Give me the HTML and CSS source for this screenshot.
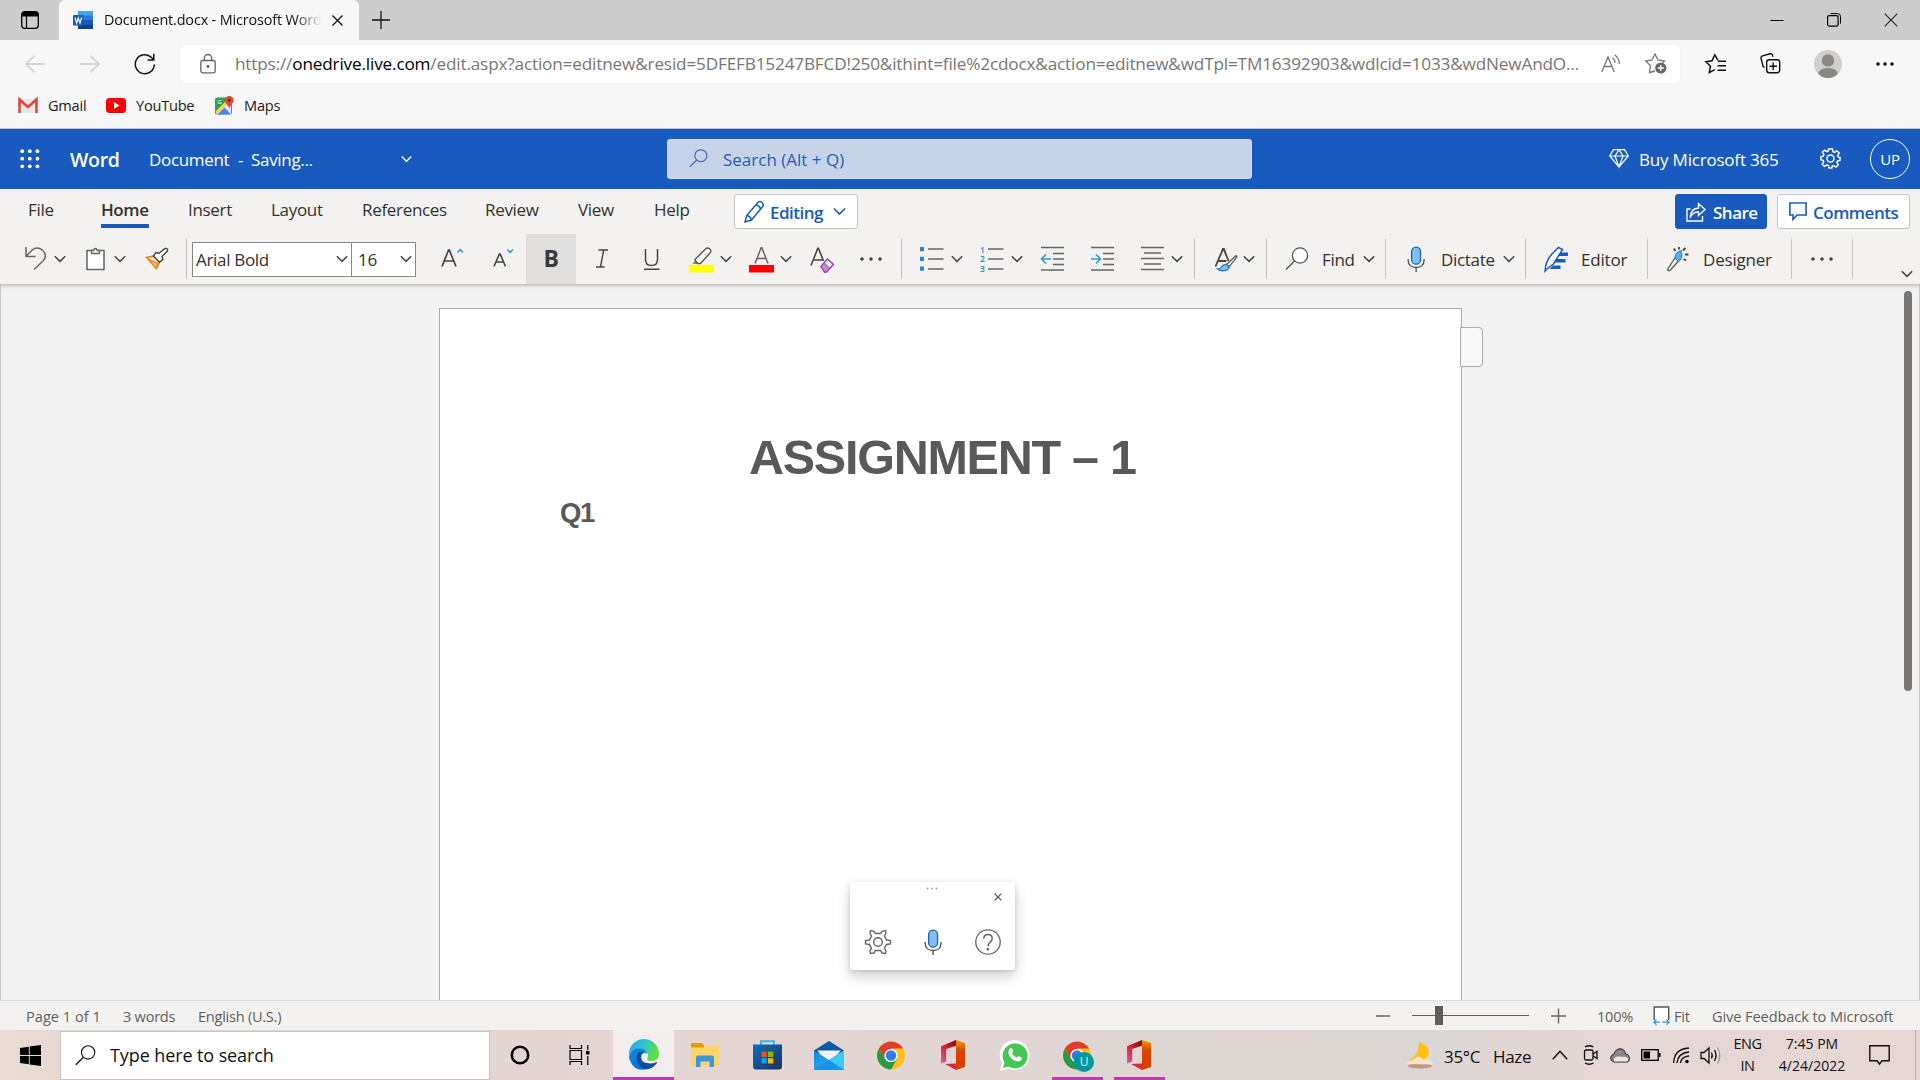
FILE: index.html
```html
<!DOCTYPE html>
<html lang="en">
<head>
<meta charset="utf-8">
<title>Document.docx - Microsoft Word Online</title>
<link rel="stylesheet" href="styles.css">
</head>
<body>
<svg width="0" height="0" class="defs" aria-hidden="true">
  <defs>
    <linearGradient id="officeA" x1="0" y1="0" x2="0" y2="1"><stop offset="0" stop-color="#f59b00"/><stop offset=".35" stop-color="#dc4402"/><stop offset="1" stop-color="#d83b01"/></linearGradient>
    <linearGradient id="officeB" x1="1" y1="0" x2="0" y2="1"><stop offset="0" stop-color="#7d0a12"/><stop offset=".5" stop-color="#d4202c"/><stop offset="1" stop-color="#c06bb8"/></linearGradient>
    <linearGradient id="edgeA" x1="0" y1="0" x2="1" y2=".4"><stop offset="0" stop-color="#2aa6ea"/><stop offset=".5" stop-color="#2bc3d2"/><stop offset="1" stop-color="#5fe03f"/></linearGradient>
    <linearGradient id="edgeB" x1="0" y1="0" x2=".6" y2="1"><stop offset="0" stop-color="#1583d8"/><stop offset="1" stop-color="#0078d7"/></linearGradient>
    <linearGradient id="store" x1="0" y1="0" x2="1" y2="1"><stop offset="0" stop-color="#0f6cbd"/><stop offset="1" stop-color="#20305f"/></linearGradient>
    <linearGradient id="mail" x1="0" y1="0" x2="1" y2="1"><stop offset="0" stop-color="#1a86dc"/><stop offset="1" stop-color="#2cb8f5"/></linearGradient>
    <symbol id="chev" viewBox="0 0 12 8"><path d="M.8 1.200 6 6.400l5.200-5.200" fill="none" stroke="currentColor" stroke-width="1.500"/></symbol>
    <symbol id="dots" viewBox="0 0 24 24"><g fill="#444"><circle cx="3" cy="12" r="1.800"/><circle cx="12" cy="12" r="1.800"/><circle cx="21" cy="12" r="1.800"/></g></symbol>
    <symbol id="mag" viewBox="0 0 24 24"><circle cx="15" cy="8.500" r="7.600" fill="var(--lens, none)" stroke="currentColor" stroke-width="1.300"/><path d="M9.600 14 1 22.600" stroke="currentColor" stroke-width="1.400"/></symbol>
    <symbol id="mic" viewBox="0 0 24 26"><rect x="7.600" y="1.200" width="9" height="17" rx="4.500" fill="#83beec" stroke="#1068b4" stroke-width="1.300"/><path d="M4.200 13v1.500c0 4.200 3 7 7.900 7s7.900-2.800 7.900-7V13M12.100 21.500v4.500" fill="none" stroke="#555" stroke-width="1.400"/></symbol>
    <symbol id="office" viewBox="0 0 24 30"><path d="M15 0 24 3v24l-9 3z" fill="url(#officeA)"/><path d="M15 0v5.800L5.200 9v12.400L0 23.500V6.200z" fill="url(#officeB)"/><path d="m4 24 11-.5V30z" fill="#e02440"/></symbol>
    <symbol id="chrome" viewBox="0 0 28 28"><circle cx="14" cy="14" r="14" fill="#fcc21b"/><path d="M1.900 7A14 14 0 0 1 26.100 7H14L8 17.500z" fill="#e33b2e"/><path d="M1.900 7A14 14 0 0 0 14 28l6-10.500H8z" fill="#2a9a48"/><circle cx="14" cy="14" r="6.600" fill="#fff"/><circle cx="14" cy="14" r="5.200" fill="#2f7de9"/></symbol>
  </defs>
</svg>

<div class="tabstrip">
  <svg class="ws" viewBox="0 0 18 18"><rect x=".7" y=".7" width="16.600" height="16.600" rx="3" fill="none" stroke="#000" stroke-width="1.300"/><path d="M1 1h16v4.500H1z" fill="#000"/><path d="M5.500 5v12" stroke="#000" stroke-width="1.200"/></svg>
  <div class="tab">
    <svg width="20" height="18" viewBox="0 0 20 18"><rect x="5" width="15" height="18" rx="1" fill="#2b7cd3"/><path d="M5 0h15v4.500H5z" fill="#41a5ee"/><path d="M5 9h15v4.500H5z" fill="#185abd"/><path d="M5 13.500h15V18H5z" fill="#103f91"/><rect y="4" width="10.500" height="10.500" rx="1" fill="#185abd"/><path d="m2 6.500 1.600 5.500 1.700-5 1.700 5 1.600-5.500" fill="none" stroke="#fff" stroke-width="1.200"/></svg>
    <span class="tabtitle">Document.docx - Microsoft Word</span>
    <svg class="tabx" width="11" height="11" viewBox="0 0 11 11"><path d="m.5.5 10 10m0-10-10 10" stroke="#111" stroke-width="1.300"/></svg>
  </div>
  <svg class="plus" width="18" height="18" viewBox="0 0 18 18"><path d="M9 0v18M0 9h18" stroke="#111" stroke-width="1.300"/></svg>
  <div class="winbtns">
    <svg width="14" height="14" viewBox="0 0 14 14"><path d="M.5 7.500h13" stroke="#000"/></svg>
    <svg width="14" height="14" viewBox="0 0 14 14"><rect x=".6" y="2.600" width="10.500" height="10.500" rx="1.500" fill="none" stroke="#000" stroke-width="1.200"/><path d="M3.500.6h7a3 3 0 0 1 3 3v7" fill="none" stroke="#000"/></svg>
    <svg width="14" height="14" viewBox="0 0 14 14"><path d="m.7.7 12.600 12.600m0-12.600L.7 13.300" stroke="#222" stroke-width="1.100"/></svg>
  </div>
</div>

<div class="browserbar">
  <svg width="20" height="18" viewBox="0 0 20 18"><path d="M9.500.8 1 9l8.500 8.200M1 9h19" fill="none" stroke="#ccc" stroke-width="1.400"/></svg>
  <svg width="20" height="18" viewBox="0 0 20 18"><path d="M10.500.8 19 9l-8.500 8.200M19 9H0" fill="none" stroke="#ccc" stroke-width="1.400"/></svg>
  <svg width="22" height="22" viewBox="0 0 22 22"><path d="M20.300 11.500A9.500 9.500 0 1 1 17.500 4.500L19.700 6.500M19.800.8v6.200h-6.200" fill="none" stroke="#111" stroke-width="1.500"/></svg>
  <div class="address">
    <svg width="16" height="20" viewBox="0 0 16 20"><rect x=".8" y="6.500" width="14.400" height="12.300" rx="2" fill="none" stroke="#666" stroke-width="1.300"/><path d="M4.300 6.500V4.200a3.700 3.700 0 0 1 7.400 0v2.300" fill="none" stroke="#666" stroke-width="1.300"/><circle cx="8" cy="12.500" r="1.400" fill="#555"/></svg>
    <span class="url">https://<b>onedrive.live.com</b>/edit.aspx?action=editnew&amp;resid=5DFEFB15247BFCD!250&amp;ithint=file%2cdocx&amp;action=editnew&amp;wdTpl=TM16392903&amp;wdlcid=1033&amp;wdNewAndO...</span>
    <svg width="20" height="19" viewBox="0 0 20 19"><path d="m.8 18 6.200-15 6.200 15M3 12.500h8" fill="none" stroke="#777" stroke-width="1.300"/><path d="M11.500 3.500q2.500 2 2.500 5.500M13.500.8Q18 4 18.500 10" fill="none" stroke="#777" stroke-width="1.200"/></svg>
    <svg width="22" height="21" viewBox="0 0 22 21"><path d="m10 18-5.500 1.500 1-6.800L.8 8l6.400-1L10 1l2.900 6 6.600 1-2 2" fill="none" stroke="#777" stroke-width="1.300"/><circle cx="15.800" cy="15" r="5.600" fill="#666"/><path d="M15.800 12v6m-3-3h6" stroke="#fff" stroke-width="1.300"/></svg>
  </div>
  <svg width="22" height="20" viewBox="0 0 22 20"><path d="m13 6.500-3.200-5.700L7 6.800.8 7.800l4.700 4.400-1.200 6.500 5.500-3" fill="none" stroke="#111" stroke-width="1.500"/><path d="M13 7.300h8M12.500 11.800H21M12.500 16.300H21" stroke="#111" stroke-width="1.500"/></svg>
  <svg width="21" height="21" viewBox="0 0 21 21"><rect x="6.700" y="6.700" width="13" height="13" rx="2.500" fill="none" stroke="#111" stroke-width="1.400"/><path d="M13.200 9.500v7.500m-3.700-3.700H17" stroke="#111" stroke-width="1.400"/><path d="m4.500 14.500-1.300-.8L.9 5Q.8 3.500 2.500 2.900L10 .8q2-.3 2.500 1.300l.5 1.700" fill="none" stroke="#111" stroke-width="1.400"/></svg>
  <svg width="28" height="28" viewBox="0 0 28 28"><circle cx="14" cy="14" r="14" fill="#d2d0ce"/><circle cx="14" cy="10.500" r="6.200" fill="#8a8886"/><path d="M4 23.500q2-5.500 10-5.500t10 5.500Q20 28 14 28T4 23.500z" fill="#8a8886"/></svg>
  <svg width="18" height="6" viewBox="0 0 18 6"><circle cx="2" cy="3" r="1.700"/><circle cx="9" cy="3" r="1.700"/><circle cx="16" cy="3" r="1.700"/></svg>
</div>

<div class="bookmarks">
  <svg width="20" height="15" viewBox="0 0 20 15"><path d="M2 1h16v14H2z" fill="#e6e6e6"/><path d="M1.500 15V1.500L10 9l8.500-7.500V15" fill="none" stroke="#dc4a40" stroke-width="2.600"/></svg>
  <span>Gmail</span>
  <svg width="20" height="15" viewBox="0 0 20 15"><rect width="20" height="15" rx="3.500" fill="#f00"/><path d="m8 4 5.500 3.500L8 11z" fill="#fff"/></svg>
  <span>YouTube</span>
  <svg width="19" height="19" viewBox="0 0 19 19"><rect y="1.500" width="17" height="17" rx="2" fill="#2ca24f"/><path d="m1 18 15-14v14.500z" fill="#e8e8e8"/><path d="m2.500 18.500 7-7 6.500 7z" fill="#4285f4"/><path d="m.5 15.500 11-11 2 2L2 18.500z" fill="#fcd34a"/><text x="2.200" y="8" font-size="6" fill="#fff" font-family="Open Sans">G</text><path d="M14.200 13C13.500 9 10 7.500 10 4.300a4.300 4.300 0 0 1 8.600 0c0 3.200-3.700 4.700-4.400 8.700z" fill="#e0443a"/><circle cx="14.300" cy="4.300" r="1.500" fill="#801d17"/></svg>
  <span>Maps</span>
</div>

<header class="apphead">
  <svg width="20" height="20" viewBox="0 0 20 20" fill="#fff"><circle cx="2.200" cy="2.200" r="1.900"/><circle cx="9.800" cy="2.200" r="1.900"/><circle cx="17.400" cy="2.200" r="1.900"/><circle cx="2.200" cy="9.700" r="1.900"/><circle cx="9.800" cy="9.700" r="1.900"/><circle cx="17.400" cy="9.700" r="1.900"/><circle cx="2.200" cy="17.300" r="1.900"/><circle cx="9.800" cy="17.300" r="1.900"/><circle cx="17.400" cy="17.300" r="1.900"/></svg>
  <span class="brand">Word</span>
  <span>Document</span><span>-</span><span>Saving...</span>
  <svg width="11" height="8"><use href="#chev"/></svg>
  <div class="appsearch"><svg width="19" height="19"><use href="#mag"/></svg><span>Search (Alt + Q)</span></div>
  <svg width="20" height="19" viewBox="0 0 20 19"><path d="M4.500.7h11L19.300 7 10 18 .7 7zM.7 7h18.600M10 18 6 7l4-6.300L14 7z" fill="none" stroke="#fff" stroke-width="1.200"/></svg>
  <span class="buy">Buy Microsoft 365</span>
  <svg width="21" height="21" viewBox="0 0 22 22"><path d="m9 1h4l.6 2.900 1.600.7 2.500-1.700 2.400 2.500-1.600 2.500.7 1.600L21 10v3l-2.600.6-.8 1.600 1.600 2.400-2.500 2.500-2.500-1.600-1.600.7L12.500 21h-3l-.7-2.600-1.600-.7-2.500 1.600L2.300 17l1.600-2.500-.7-1.600L1 12.500V9l2.400-.5.7-1.600-1.600-2.500L5 2.200l2.300 1.600 1.200-.6z" fill="none" stroke="#fff" stroke-width="1.500"/><circle cx="11" cy="11" r="3.700" fill="none" stroke="#fff" stroke-width="1.500"/></svg>
  <div class="me">UP</div>
</header>

<nav class="menu">
  <span>File</span><span class="on">Home</span><span>Insert</span><span>Layout</span><span>References</span><span>Review</span><span>View</span><span>Help</span>
  <div class="btn editing"><svg width="20" height="23" viewBox="0 0 20 23"><path d="M1 22 2.700 15.500 13.800 2.500q2-2 4.200 0t.5 4.200L7.500 20zM2.700 15.500q3.500.5 4.800 4.500M12 4.800q3.500 1 4.500 4.200" fill="none" stroke="#185abd" stroke-width="1.500"/></svg><span>Editing</span><svg width="13" height="9"><use href="#chev"/></svg></div>
  <div class="btn share"><svg width="20" height="20" viewBox="0 0 20 20"><path d="M4.500 7H1v12h15.500v-5M4.500 14.500Q5 6.500 12.500 6V1.500L19 7.500l-6.500 6V10Q8 9.500 4.500 14.500z" fill="none" stroke="#fff" stroke-width="1.400"/></svg><span>Share</span></div>
  <div class="btn comm"><svg width="18" height="19" viewBox="0 0 18 19"><path d="M.9 1h16.200v12H8l-4 4.500V13H.9z" fill="none" stroke="#185abd" stroke-width="1.600"/></svg><span>Comments</span></div>
</nav>

<div class="ribbon">
  <div class="grp g-clip">
    <svg class="i" viewBox="0 0 24 24"><path d="M2 0v9.500h9.500M2.300 9 8 3.200Q13-1 18.500 3.200 24 8.500 19 14l-9 8.500" fill="none" stroke="#666" stroke-width="1.500"/></svg>
    <svg class="c"><use href="#chev"/></svg>
    <svg class="i" viewBox="0 0 24 24"><path d="M4 3.500h17v19H4z" fill="#fff" stroke="#666" stroke-width="1.500"/><path d="M8.500 6.500v-3h2q1.800-4 3.800 0h2.200v3z" fill="#f3f2f1" stroke="#666" stroke-width="1.400"/></svg>
    <svg class="c"><use href="#chev"/></svg>
    <svg class="i" viewBox="0 0 24 24"><path d="m1.500 10.500 7-1.500 6 6-3 6.500z" fill="#fbe3bd" stroke="#e07d1b" stroke-width="1.400"/><path d="m4 12.500 9 4-2 5.500z" fill="#f6b94f" stroke="#e07d1b"/><path d="m8.500 9 2.500-3.500 3 .8L20 1.500q3-.5 2.500 2.300L17 9.500l.8 3-3.300 2.800z" fill="#fff" stroke="#444" stroke-width="1.400"/></svg>
  </div>
  <div class="grp g-font">
    <div class="combo"><span>Arial Bold</span><svg class="c"><use href="#chev"/></svg></div>
    <div class="combo size"><span>16</span><svg class="c"><use href="#chev"/></svg></div>
    <svg class="i" viewBox="0 0 24 24"><path d="M1 19.500 7.500 3h.8L15 19.500M3.500 14h9" fill="none" stroke="#444" stroke-width="1.700"/><path d="m16.500 5.500 2.700-3 2.700 3" fill="none" stroke="#2b8fd0" stroke-width="1.500"/></svg>
    <svg class="i" viewBox="0 0 24 24"><path d="M3 19.500 8.400 7h.7l5.400 12.500M5 15h7.500" fill="none" stroke="#444" stroke-width="1.600"/><path d="m16.500 2.500 2.700 3 2.700-3" fill="none" stroke="#2b8fd0" stroke-width="1.500"/></svg>
    <div class="bold">B</div>
    <svg class="i" viewBox="0 0 24 24"><path d="M8.500 3h9.500M6 20h8.500M13.700 3l-3.200 17" fill="none" stroke="#444" stroke-width="1.400"/></svg>
    <svg class="i" viewBox="0 0 24 24"><path d="M5.500 2v10.500q0 6 6 6t6-6V2M4 22.300h15.500" fill="none" stroke="#444" stroke-width="1.500"/></svg>
    <svg class="i25" viewBox="0 0 25 25"><path d="M0 18h25v7.500H0z" fill="#ff0"/><path d="M3.500 17 7 11.500l3 3.500-1.500 2z" fill="#888"/><path d="m6 12.500 10-10q2-2.500 4.500-.7t.5 4.200L11.500 16.500h-3z" fill="#f8f8f8" stroke="#555" stroke-width="1.400"/></svg>
    <svg class="c"><use href="#chev"/></svg>
    <svg class="i25" viewBox="0 0 25 25"><path d="M0 18h25v7.500H0z" fill="red"/><path d="M6 16.500 12.200.8h.6L19 16.500M8.200 11.500h8.600" fill="none" stroke="#666" stroke-width="1.500"/></svg>
    <svg class="c"><use href="#chev"/></svg>
    <svg class="i25" viewBox="0 0 25 25"><path d="M1 18.500 7.800 1.200h.6L13.500 14M3.500 13h9.300" fill="none" stroke="#444" stroke-width="1.600"/><path d="m11 19.500 6.500-7.500 6 5.500-7 7.500h-2z" fill="#fff" stroke="#9a3bae" stroke-width="1.400"/><path d="m11 19.500 3.200-3.700 5.600 5.400-3.300 3.800h-2z" fill="#c28bce" stroke="#9a3bae"/></svg>
    <svg class="i"><use href="#dots"/></svg>
  </div>
  <div class="grp g-para">
    <svg class="i" viewBox="0 0 24 24"><path d="M0 0h4v4.300H0zM0 9.700h4V14H0zM0 19.500h4v4.300H0z" fill="#2b88c8"/><path d="M8 2h15.500M8 12h15.500M8 22h15.500" stroke="#666" stroke-width="1.500"/></svg>
    <svg class="c"><use href="#chev"/></svg>
    <svg class="i" viewBox="0 0 24 24"><g fill="#2b88c8" font-size="8.500" font-family="Open Sans" font-weight="600"><text x="0" y="5.500">1</text><text x="0" y="15">2</text><text x="0" y="24.500">3</text></g><path d="M8 2h15.500M8 12h15.500M8 22h15.500" stroke="#666" stroke-width="1.500"/></svg>
    <svg class="c"><use href="#chev"/></svg>
    <svg class="i" viewBox="0 0 24 24"><path d="M1 .5h23M13 6.500h11M13 12h11M13 17.500h11M1 23h23" stroke="#666" stroke-width="1.600"/><path d="m6 7.500-4.500 4.500L6 16.500M1.500 12H11" fill="none" stroke="#2b9bd8" stroke-width="1.600"/></svg>
    <svg class="i" viewBox="0 0 24 24"><path d="M1 .5h23M13 6.500h11M13 12h11M13 17.500h11M1 23h23" stroke="#666" stroke-width="1.600"/><path d="m6 7.500 4.500 4.500L6 16.500M1 12h9.500" fill="none" stroke="#2b9bd8" stroke-width="1.600"/></svg>
    <svg class="i" viewBox="0 0 24 24"><path d="M0 .5h23M3 6h17M0 11.500h23M3 17h17M0 22.500h23" stroke="#666" stroke-width="1.600"/></svg>
    <svg class="c"><use href="#chev"/></svg>
  </div>
  <div class="grp g-style">
    <svg class="i" viewBox="0 0 24 24"><path d="M1.500 19.500 9 2h.8l4.700 12M4.500 14h8" fill="none" stroke="#444" stroke-width="1.800"/><path d="M12 18 21.500 9q2-.5 1 1.500L15 20z" fill="#fff" stroke="#555" stroke-width="1.300"/><path d="M3.500 22q3 0 4.500-2.500 3-4 6.500-.5 1 4.500-4.500 4.700-4 .3-6.500-1.700z" fill="#83beec" stroke="#1f78c0" stroke-width="1.300"/></svg>
    <svg class="c"><use href="#chev"/></svg>
  </div>
  <div class="grp g-find"><svg class="i lens"><use href="#mag"/></svg><span>Find</span><svg class="c"><use href="#chev"/></svg></div>
  <div class="grp g-dict"><svg width="24" height="26"><use href="#mic"/></svg><span>Dictate</span><svg class="c"><use href="#chev"/></svg></div>
  <div class="grp g-edit"><svg class="i" viewBox="0 0 24 24"><path d="M1 24Q1.500 14 8 7l6.500-6.500 4 2L9.500 17 4 21z" fill="#fff" stroke="#185abd" stroke-width="1.500"/><path d="M16.500 5.500H24v3.500h-10zM13 12h8.500v3.500H10.500zM9 18.500h7.500V22H5.500z" fill="#185abd"/></svg><span>Editor</span></div>
  <div class="grp g-des"><svg class="i" viewBox="0 0 24 24"><path d="M1.500 22.500 10 9.500l4 3-10 11q-2 .5-2.500-1z" fill="#fff" stroke="#555" stroke-width="1.300"/><path d="M9 11.500Q8.500 5 15.500 3.500q-1 2 .5 4.500-.5 5-3.500 6.500z" fill="#5aaee8" stroke="#1f78c0"/><path d="m8 1.500 1.500 2.500M13 0v2.500M19.500 1 17 3.500M19 7.500h3.500M17.500 12l2.500 1.500" stroke="#444" stroke-width="1.800"/></svg><span>Designer</span></div>
  <div class="grp g-more"><svg class="i"><use href="#dots"/></svg></div>
  <svg class="c collapse"><use href="#chev"/></svg>
</div>

<main class="canvas">
  <article class="page">
    <h1>ASSIGNMENT – 1</h1>
    <p>Q1</p>
  </article>
  <div class="note"></div>
  <div class="scroll"></div>
  <div class="dictation">
    <svg class="grip" width="12" height="3" viewBox="0 0 12 3" fill="#aaa"><circle cx="1.500" cy="1.500" r="1"/><circle cx="6" cy="1.500" r="1"/><circle cx="10.500" cy="1.500" r="1"/></svg>
    <svg class="x" width="8" height="8" viewBox="0 0 8 8"><path d="m.6.6 6.800 6.800m0-6.800L.6 7.400" stroke="#555" stroke-width="1.300"/></svg>
    <div class="dicons">
      <svg width="26" height="26" viewBox="0 0 26 26"><path d="M10.500 4.500 9 2.300 5.500 1.500 5 4l1.500 3-2 4-4 .5v3.500l4 .5 2 4L5 22l.5 2.500L9 24l1.500-2.500h5L17 24l3.500.5.5-2.500-1.500-3 2-3.500 4-.5v-3.500l-4-.5-2-4L21 4l-.5-2.500-3.500.8-1.500 2.200z" fill="none" stroke="#666" stroke-width="1.400"/><circle cx="13" cy="13" r="4.300" fill="none" stroke="#666" stroke-width="1.400"/></svg>
      <svg width="24" height="26"><use href="#mic"/></svg>
      <svg width="26" height="26" viewBox="0 0 26 26"><circle cx="13" cy="13" r="12.200" fill="none" stroke="#666" stroke-width="1.300"/><path d="M8.800 9.800Q8.800 5.500 13 5.500t4.200 4q0 2-2 3.700-2.200 1.800-2.200 4" fill="none" stroke="#666" stroke-width="1.500"/><circle cx="12.800" cy="20.300" r="1.200" fill="#555"/></svg>
    </div>
  </div>
</main>

<footer class="status">
  <span class="pages">Page 1 of 1</span><span>3 words</span><span>English (U.S.)</span>
  <svg width="14" height="20" viewBox="0 0 14 20"><path d="M0 10h14" stroke="#666" stroke-width="1.600"/></svg>
  <div class="slider"><i></i></div>
  <svg width="15" height="20" viewBox="0 0 15 20"><path d="M0 10h15M7.500 2.500v15" stroke="#666" stroke-width="1.400"/></svg>
  <span class="pct">100%</span>
  <svg width="17" height="19" viewBox="0 0 17 19"><path d="M1.200 14V1h14.500v13" fill="#fff" stroke="#555" stroke-width="1.400"/><path d="M1 16.200h6m2.500 0H16M3.500 13.500.9 16.200l2.600 2.600M13.500 13.500l2.600 2.700-2.600 2.600" fill="none" stroke="#2b9bd8" stroke-width="1.200"/></svg>
  <span>Fit</span><span class="fb">Give Feedback to Microsoft</span>
</footer>

<div class="taskbar">
  <svg width="21" height="21" viewBox="0 0 21 21"><path d="M0 3 8.800 1.700v8.400H0zM9.700 1.500 21 0v10.100H9.700zM0 11h8.800v8.300L0 18zM9.700 11H21v10L9.700 19.400z"/></svg>
  <div class="tsearch"><svg width="21" height="21"><use href="#mag"/></svg><span>Type here to search</span></div>
  <svg width="20" height="20" viewBox="0 0 20 20"><circle cx="10" cy="10" r="8.200" fill="none" stroke="#000" stroke-width="2.500"/></svg>
  <svg width="21" height="20" viewBox="0 0 21 20"><path d="M1 0v3.500h11.500V0M1 20v-3.500h11.500V20M1 5.500h11.500v9H1zM18.800 0v5M18.800 11v9" fill="none" stroke="#000" stroke-width="1.200"/><path d="M17 6h3.500v3.500H17z"/></svg>
  <div class="app active"><svg width="30" height="30" viewBox="0 0 30 30"><path d="M0 15A15 15 0 0 1 30 13q0 8-7 8-7 .5-4-4 1-6-6-7Q3 9 0 15z" fill="url(#edgeA)"/><path d="M0 16Q3 7.500 11 8.500q6 .5 7.500 5.500-6-3.500-7 3Q11 25 20 28.500 6 33 1.200 21 0 18.500 0 16z" fill="url(#edgeB)"/><path d="M9 13q-4 9 4 15 8 4 15-5 .5-1.500-1-.8-7 3-11-1Q12 17 15 13q-3.500-2.500-6 0z" fill="#114a9e"/><path d="M12 17q.5-4.500 4.500-4 3 2 1.500 5.500-1.500 4 4 3.800-9 2.500-10-5.300z" fill="#f3eeee"/></svg></div>
  <div class="app"><svg width="28" height="24" viewBox="0 0 28 24"><path d="M0 0h11l2 2.500V6H0z" fill="#dc9d05"/><path d="M0 4.500h13l1.500-2H28V22a1 1 0 0 1-1 1H0z" fill="#ffd469"/><path d="M5 24V14.500a2 2 0 0 1 2-2h14a2 2 0 0 1 2 2V24h-4.500v-5.500h-9V24z" fill="#3a96dd"/></svg></div>
  <div class="app"><svg width="29" height="30" viewBox="0 0 29 30"><path d="M8 6V1.300h13V6" fill="none" stroke="#2bb8f0" stroke-width="2"/><path d="M0 4.500h29V26q0 3.500-3 3.500H3q-3 0-3-3.500z" fill="url(#store)"/><path d="M8.500 11.500h5.300V17H8.500z" fill="#f25022"/><path d="M15 11.500h5.300V17H15z" fill="#7fba00"/><path d="M8.500 18.200h5.300v5.300H8.500z" fill="#00a4ef"/><path d="M15 18.200h5.300v5.300H15z" fill="#ffb900"/></svg></div>
  <div class="app"><svg width="30" height="29" viewBox="0 0 30 29"><path d="M0 9.500 15 0l15 9.500v3H0z" fill="#0c59a4"/><path d="M3 9.500h24L15 21z" fill="#f3f3f3"/><path d="M0 9.500 15 19l15-9.500V29H0z" fill="url(#mail)"/><path d="m15 19 15-9.500V29z" fill="#3ccbf8"/><path d="m15 19 15 10H0z" fill="#1e93e4"/></svg></div>
  <div class="app"><svg width="28" height="29"><use href="#chrome"/></svg></div>
  <div class="app"><svg width="24" height="30"><use href="#office"/></svg></div>
  <div class="app"><svg width="30" height="31" viewBox="0 0 30 31"><path d="m0 31 2-8A15 15 0 1 1 8 28.500z" fill="#fff"/><path d="m3 28 1.500-5.500A12.500 12.500 0 1 1 8.500 26.500z" fill="#45c655"/><path d="M10.200 8.500q1-1 2 .2l1.300 2.800-1.300 2q1.500 3 4.600 4.300l1.700-1.800 3.500 1.800q0 3.500-4 3.700-7-1-9.500-8-.5-3.500 1.700-5z" fill="#fff"/></svg></div>
  <div class="app run"><div class="cu"><svg width="28" height="29"><use href="#chrome"/></svg><b>U</b></div></div>
  <div class="app run"><svg width="24" height="30"><use href="#office"/></svg></div>
  <div class="tray">
    <svg width="29" height="27" viewBox="0 0 29 27"><path d="M14 0q13 5 9 14-5 8-20 4 11-3 11-18z" fill="#ffc20e"/><ellipse cx="15" cy="24" rx="12" ry="2.500" fill="#c49584"/><path d="M0 22q6-3 9-5 4-4 8-.500 2 2 6 1.500 4 1 6 4.500z" fill="#f5e3cc"/></svg>
    <span class="wx">35°C</span><span class="wx">Haze</span>
    <svg width="16" height="10" viewBox="0 0 16 10"><path d="m.8 9.200 7.200-8 7.200 8" fill="none" stroke="#111" stroke-width="1.400"/></svg>
    <svg width="16" height="20" viewBox="0 0 16 20"><rect x="1.500" y="5" width="8.500" height="10" rx="1.500" fill="none" stroke="#111" stroke-width="1.300"/><path d="m10 9 4-2.500v7L10 11M2 2Q6-.5 10.500 2M2 18q4 2.500 8.500 0" fill="none" stroke="#111" stroke-width="1.300"/></svg>
    <svg width="20" height="15" viewBox="0 0 20 15"><path d="M4 14q-3.500-1-3.300-4T4 6Q5.500 1 10 .8T15.500 6q4 .5 3.900 4.500T16 14z" fill="#888" stroke="#222"/><path d="M4 13.500q-1-4.500 4-5l8 .5q4 2 1 4.500z" fill="#e8e8e8"/></svg>
    <svg width="20" height="12" viewBox="0 0 20 12"><rect x=".7" y=".7" width="16.500" height="10.600" fill="none" stroke="#000" stroke-width="1.300"/><path d="M2.500 2.500h6.500v7H2.500zM18 4h1.500v4H18z"/></svg>
    <svg width="17" height="17" viewBox="0 0 17 17"><g fill="none" stroke="#111" stroke-width="1.300"><path d="M.7 16Q1 2 16 1M4 16Q5 6 16 5M7.500 16Q8.500 9.500 16 9"/></g><circle cx="14" cy="14.500" r="1.700"/></svg>
    <svg width="21" height="19" viewBox="0 0 21 19"><path d="M1 6.500h3l5-4.500v15l-5-4.500H1zM11.500 6.500q1.500 3 0 6M14.500 4q3 5.500 0 11" fill="none" stroke="#111" stroke-width="1.300"/><path d="M17.500 1.500q4.500 8 0 16" fill="none" stroke="#999" stroke-width="1.200"/></svg>
    <span class="stack lang">ENG<br>IN</span>
    <span class="stack clock">7:45 PM<br>4/24/2022</span>
    <svg width="21" height="20" viewBox="0 0 21 20"><path d="M.8.8h19.400v15H13L10.500 19 8 15.800H.8z" fill="none" stroke="#111" stroke-width="1.400"/></svg>
    <i class="peek"></i>
  </div>
</div>
</body>
</html>
```
FILE: styles.css
```css
* { box-sizing: border-box; }
body {
  margin: 0;
  width: 1920px;
  height: 1080px;
  overflow: hidden;
  display: flex;
  flex-direction: column;
  font-family: "Open Sans", "Noto Sans", sans-serif;
  font-size: 17px;
  letter-spacing: -0.32px;
  color: #323130;
  background: #f7f7f7;
}
body > * { flex: none; }
span { white-space: nowrap; }
svg { display: block; flex: none; overflow: visible; }
.defs { position: absolute; }

/* window tabs */
.tabstrip {
  height: 40px;
  display: flex;
  align-items: center;
  padding-left: 21px;
  background: #cdcdcd;
}
.ws { width: 18px; height: 18px; }
.tab {
  margin-left: 20px;
  width: 300px;
  height: 40px;
  padding: 0 16px 0 14px;
  display: flex;
  align-items: center;
  background: #f7f7f7;
  border-radius: 6px 6px 0 0;
}
.tabtitle {
  margin: 0 0 1px 11px;
  width: 218px;
  overflow: hidden;
  font-size: 14.4px;
  letter-spacing: -0.14px;
  color: #111;
  -webkit-mask: linear-gradient(90deg, #000 88%, transparent);
  mask: linear-gradient(90deg, #000 88%, transparent);
}
.tabx { margin-left: 11px; }
.plus { margin-left: 13px; }
.winbtns { margin-left: auto; display: flex; gap: 43px; padding-right: 22px; }

/* navigation and address */
.browserbar {
  height: 46px;
  display: grid;
  grid-template-columns: 55px 54px 46px 1525px 55px 54px 62px auto;
  padding: 1px 0 0 25px;
  align-items: center;
}
.address {
  width: 1500px;
  height: 38px;
  border-radius: 6px;
  background: #fff;
  box-shadow: 0 0 3px rgba(0, 0, 0, .06);
  display: grid;
  grid-template-columns: 35px 1366px 44px auto;
  padding-left: 20px;
  align-items: center;
}
.url { font-size: 17.2px; color: #767676; letter-spacing: -0.175px; }
.url b { font-weight: 400; color: #000; }

.bookmarks {
  height: 43px;
  display: grid;
  grid-template-columns: 30px 58px 30px 79px 29px auto;
  padding: 0 0 4px 18px;
  align-items: center;
  font-size: 14.6px;
  letter-spacing: -0.25px;
  color: #1b1b1b;
  border-bottom: 1px solid #c4c4c4;
}

/* application header */
.apphead {
  height: 60px;
  display: grid;
  grid-template-columns: 50px 79px 89px 13px 150px 266px 942px 30px 181px 50px auto;
  padding: 0 0 1px 20px;
  align-items: center;
  background: #185abd;
  color: #fff;
}
.apphead > span { padding-top: 1px; }
.brand { font-size: 19.5px; font-weight: 600; }
.buy { letter-spacing: -0.2px; }
.appsearch {
  width: 585px;
  height: 40px;
  display: flex;
  align-items: center;
  gap: 15px;
  padding-left: 21px;
  border: 1px solid #d3def0;
  border-radius: 3px;
  background: #c7d3e8;
  color: #2a5db0;
}
.appsearch span { padding-top: 1px; letter-spacing: 0; }
.me {
  width: 40px;
  height: 40px;
  border: 1px solid #fff;
  border-radius: 50%;
  display: grid;
  place-items: center;
  font-size: 15px;
}

/* ribbon tabs */
.menu {
  height: 45px;
  position: relative;
  z-index: 2;
  display: grid;
  grid-template-columns: 73px 87px 83px 91px 123px 93px 76px 80px 941px 102px auto;
  padding: 5px 0 0 28px;
  align-items: start;
  background: #f3f2f1;
}
.menu > span { padding-top: 3px; line-height: 25px; }
.menu > .on { justify-self: start; height: 34px; font-weight: 600; letter-spacing: -0.4px; border-bottom: 4px solid #185abd; }
.btn {
  height: 35px;
  display: flex;
  align-items: center;
  border: 1px solid #c8c6c4;
  border-radius: 3px;
  background: #fff;
  color: #185abd;
  font-weight: 600;
  letter-spacing: -0.5px;
}
.btn span { padding-top: 1px; }
.editing { width: 124px; padding-left: 9px; gap: 6px; }
.editing span + svg { margin-left: 4px; }
.share { width: 92px; padding-left: 10px; gap: 7px; background: #185abd; border-color: #185abd; color: #fff; }
.comm { width: 133px; padding-left: 11px; gap: 6px; }

/* ribbon commands */
.ribbon {
  height: 51px;
  display: flex;
  align-items: center;
  background: #f3f2f1;
  border-bottom: 1px solid #c8c6c4;
  box-shadow: 0 1px 4px rgba(0, 0, 0, .2);
  position: relative;
  z-index: 1;
}
.grp { height: 40px; display: grid; align-items: center; border-right: 1px solid #c8c6c4; }
.i { width: 24px; height: 24px; }
.i25 { width: 25px; height: 25px; }
.c { width: 12px; height: 8px; color: #444; }
.lens { --lens: #fff; color: #555; }
.g-clip { width: 187px; padding-left: 24px; grid-template-columns: 30px 29px 31px 31px auto; }
.g-font { width: 715px; padding-left: 5px; grid-template-columns: 159px 90px 50px 35px 64px 50px 49px 31px 29px 31px 30px 49px auto; }
.g-para { width: 293px; padding-left: 18px; grid-template-columns: 31px 29px 31px 29px 50px 51px 30px auto; }
.g-style { width: 72px; padding-left: 19px; grid-template-columns: 29px auto; }
.g-find { width: 119px; padding-left: 18px; grid-template-columns: 37px 41px auto; }
.g-dict { width: 140px; padding-left: 18px; grid-template-columns: 37px 62px auto; }
.g-edit { width: 122px; padding-left: 18px; grid-template-columns: 37px auto; }
.g-des { width: 144px; padding-left: 18px; grid-template-columns: 37px auto; }
.g-des span, .g-edit span { letter-spacing: -0.2px; }
.g-more { width: 61px; padding-left: 18px; }
.combo {
  width: 160px;
  height: 35px;
  display: flex;
  align-items: center;
  justify-content: space-between;
  padding: 0 3px;
  border: 1px solid #8a8886;
  background: #fff;
}
.combo.size { width: 65px; padding-left: 6px; }
.bold {
  width: 50px;
  height: 50px;
  margin: -5px 0;
  display: grid;
  place-items: center;
  background: #e1dfdd;
  font-size: 23px;
  line-height: 48px;
  align-content: start;
  font-weight: 700;
  color: #3b3a39;
}
.collapse { margin: 30px 0 0 48px; }

/* document */
.canvas {
  height: 715px;
  position: relative;
  overflow: hidden;
  padding: 23px 0 0 438px;
  border-left: 1px solid #c8c8c8;
  border-right: 1px solid #c8c8c8;
  background: #f3f3f3;
}
.page {
  width: 1023px;
  height: 700px;
  border: 1px solid #ababab;
  background: #fff;
  padding: 118px 0 0 120px;
  font-family: "Liberation Sans", Arial, sans-serif;
  font-weight: 700;
  color: #595959;
}
.page h1 { margin: 0 0 0 189px; font-size: 48.5px; line-height: 60px; letter-spacing: -1.25px; white-space: nowrap; }
.page p { margin: 8px 0 0; font-size: 27.5px; line-height: 36px; letter-spacing: -1.5px; }
.note {
  position: absolute;
  left: 1459px;
  top: 42px;
  width: 23px;
  height: 40px;
  border: 1px solid #ababab;
  border-radius: 0 4px 4px 0;
  background: #f8f8f8;
}
.scroll {
  position: absolute;
  left: 1903px;
  top: 6px;
  width: 8px;
  height: 400px;
  border-radius: 4px;
  background: #797775;
}
.dictation {
  position: absolute;
  left: 849px;
  top: 597px;
  width: 165px;
  height: 88px;
  padding-top: 5px;
  display: flex;
  flex-direction: column;
  align-items: center;
  border-radius: 3px;
  background: #fff;
  box-shadow: 0 6px 14px rgba(0, 0, 0, .2), 0 1px 4px rgba(0, 0, 0, .12);
}
.grip { margin-right: 1px; }
.dictation .x { align-self: flex-end; margin: 3px 13px 0 0; }
.dicons { width: 136px; margin-top: 28px; display: flex; justify-content: space-between; }

.status {
  height: 30px;
  display: grid;
  grid-template-columns: 97px 75px 1178px 36px 139px 46px 56px 21px 38px auto;
  padding-left: 26px;
  align-items: center;
  border-top: 1px solid #dcdcdc;
  background: #f3f2f1;
  color: #605e5c;
  font-size: 14.6px;
  letter-spacing: -0.27px;
}
.pages { letter-spacing: 0; }
.fb { letter-spacing: -0.1px; }
.slider { width: 117px; height: 19px; padding-left: 23px; background: linear-gradient(#605e5c, #605e5c) 0 9px / 100% 1px no-repeat; }
.slider i { display: block; width: 8px; height: 19px; background: #605e5c; }

/* desktop taskbar */
.taskbar {
  height: 50px;
  display: flex;
  align-items: center;
  padding-left: 20px;
  background: linear-gradient(90deg, #e8dcd4, #e3d5d3 6%, #e4d6d3 40%, #ddd6d3 62%, #dcd6d4 75%, #e5d7d5 84%, #e6d7d5);
  color: #111;
}
.tsearch {
  width: 430px;
  height: 49px;
  margin: 0 20px 0 19px;
  padding-left: 14px;
  display: flex;
  align-items: center;
  gap: 14px;
  border: 1px solid #c9c2c0;
  background: #fff;
  font-size: 18px;
  letter-spacing: -0.1px;
}
.tsearch + svg + svg { margin: 0 23px 0 39px; }
.app {
  position: relative;
  width: 62px;
  height: 50px;
  display: grid;
  place-items: center;
}
.active { width: 61px; background: #f3eeed; border-bottom: 3px solid #c239b3; padding-top: 3px; }
.run::after {
  content: "";
  position: absolute;
  left: 6px;
  bottom: 0;
  width: 51px;
  height: 3px;
  background: #c239b3;
}
.cu { position: relative; }
.cu b {
  position: absolute;
  left: 11px;
  top: 11px;
  width: 20px;
  height: 20px;
  border-radius: 50%;
  background: #00979d;
  color: #d9f0f0;
  font-size: 12px;
  font-weight: 400;
  line-height: 20px;
  text-align: center;
}
.tray {
  width: 515px;
  height: 50px;
  margin-left: auto;
  display: grid;
  grid-template-columns: 39px 49px 59px 31px 27px 31px 32px 27px 30px 48px 91px 46px auto;
  align-items: center;
}
.wx { font-size: 17px; padding-top: 2px; }
.stack { width: 68px; text-align: center; font-size: 14px; line-height: 22px; }
.stack.lang { width: 35px; font-size: 14.5px; letter-spacing: -0.5px; }
.clock { letter-spacing: 0; }
.peek { height: 50px; border-left: 1px solid #b9adab; }
```
